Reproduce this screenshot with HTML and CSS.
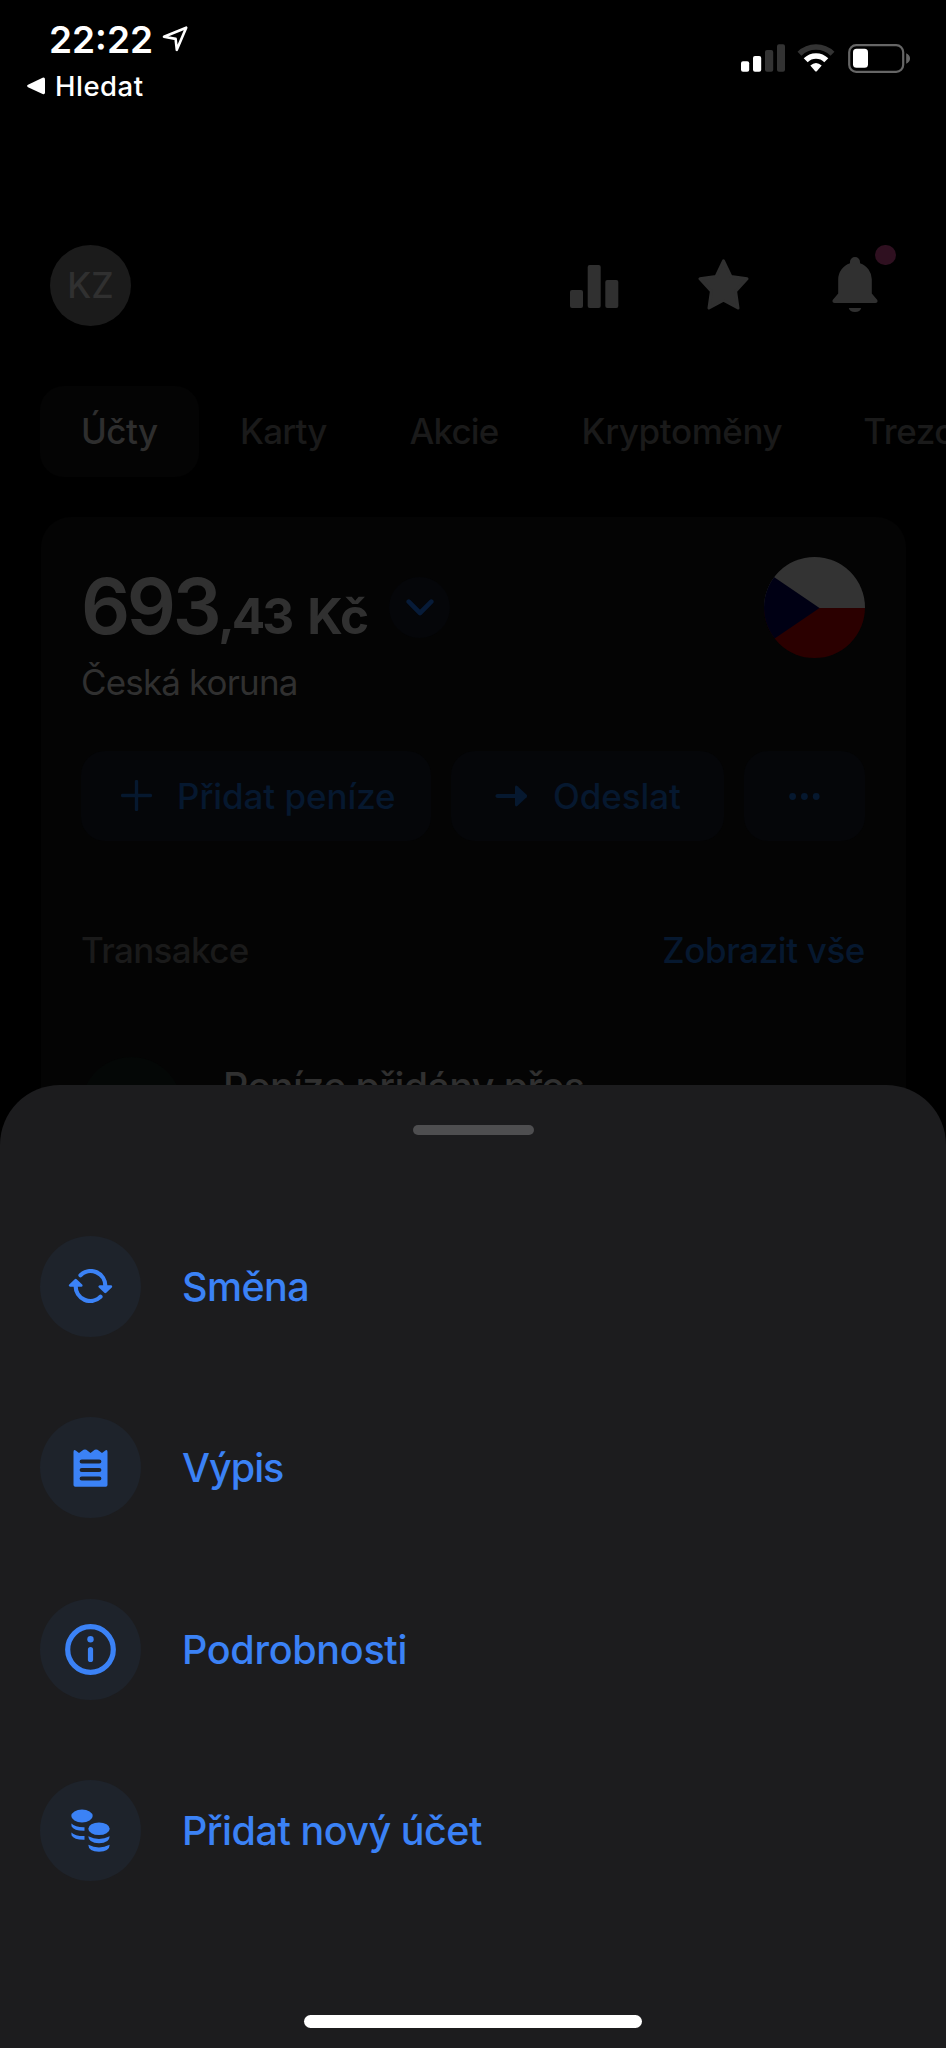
FILE: index.html
```html
<!DOCTYPE html>
<html lang="cs">
<head>
<meta charset="utf-8">
<title>Účty</title>
<link rel="stylesheet" href="styles.css">
</head>
<body>
<div class="screen">
  <header class="status">
    <div class="status-left">
      <div class="clock">
        <span>22:22</span>
        <svg width="27" height="28" viewBox="0 0 27 28" fill="none" stroke="#fff" stroke-width="2.6" stroke-linejoin="round"><path d="M2 11.8 24.2 2.7 14.8 24.8 13.6 13.9z"/></svg>
      </div>
      <div class="back">
        <svg width="19" height="18" viewBox="0 0 19 18"><path d="M1 7.8 15.6.8Q18 0 18 2.400V15.400Q18 17.800 15.600 17L1 10.200Q-.8 9 1 7.800z" fill="#fff"/></svg>
        <span>Hledat</span>
      </div>
    </div>
    <div class="status-right">
      <svg class="signal" width="44" height="28" viewBox="0 0 44 28">
        <rect x="0" y="17.300" width="8.200" height="10.500" rx="2" fill="#fff"/>
        <rect x="12" y="12" width="8.200" height="15.800" rx="2" fill="#fff"/>
        <rect x="24" y="6" width="8.200" height="21.800" rx="2" fill="#333"/>
        <rect x="36" y="0.300" width="8" height="27.500" rx="2" fill="#333"/>
      </svg>
      <svg class="wifi" width="38" height="28" viewBox="0 0 38 28">
        <path d="M2.500 9.800A23.500 23.500 0 0 1 35.500 9.800" fill="none" stroke="#333" stroke-width="5.600"/>
        <path d="M8.700 16.300A14.500 14.500 0 0 1 29.300 16.300" fill="none" stroke="#fff" stroke-width="5.600"/>
        <path d="M13.300 21.600Q19 16.400 24.700 21.600L20 27Q19 28 18 27z" fill="#fff"/>
      </svg>
      <svg width="63" height="29" viewBox="0 0 63 29">
        <rect x="1.200" y="1.200" width="54" height="26.600" rx="7" fill="none" stroke="#666" stroke-width="2.200"/>
        <rect x="5" y="4.800" width="15" height="19" rx="3.500" fill="#fff"/>
        <path d="M58.200 9.300Q62 11 62 14.500T58.200 19.700z" fill="#666"/>
      </svg>
    </div>
  </header>

  <div class="topbar">
    <div class="avatar">KZ</div>
    <nav class="tools">
      <svg width="49" height="44" viewBox="0 0 49 44" fill="#303030"><rect y="25" width="13" height="18" rx="2"/><rect x="17.700" width="13" height="43" rx="2"/><rect x="35.300" y="15" width="13" height="28" rx="2"/></svg>
      <svg class="star" width="51" height="52" viewBox="0 0 51 52"><path d="M25.500 1.800 33 17.600 49 19.800 37.600 32.200 40 49 25.500 41.200 11 49 13.400 32.200 2 19.800 18 17.600z" fill="#303030" stroke="#303030" stroke-width="3" stroke-linejoin="round"/></svg>
      <div class="bell">
        <svg width="46" height="57" viewBox="0 0 46 57" fill="#303030"><path d="M18 6.200V5A5 5 0 0 1 28 5V6.200A17 17 0 0 1 39.800 22.500V36.500L45.300 43Q46.300 45.700 43.500 46H2.500Q-.3 45.700.7 43L6.200 36.500V22.500A17 17 0 0 1 18 6.200z"/><path d="M16.800 51H29.200A6.300 5 0 0 1 16.800 51z"/></svg>
        <i class="dot"></i>
      </div>
    </nav>
  </div>

  <nav class="tabs">
    <a class="tab active">Účty</a>
    <a class="tab tight">Karty</a>
    <a class="tab tight">Akcie</a>
    <a class="tab">Kryptoměny</a>
    <a class="tab">Trezory</a>
  </nav>

  <main class="card">
    <div class="account">
      <div>
        <div class="balance">
          <span class="whole">693</span><span class="cents">,43</span><span class="unit">Kč</span>
          <span class="expand"><svg width="28" height="18" viewBox="0 0 28 18" fill="none" stroke="#071b38" stroke-width="4.600" stroke-linecap="round" stroke-linejoin="round"><path d="M2.700 2.700 14 14 25.300 2.700"/></svg></span>
        </div>
        <div class="currency">Česká koruna</div>
      </div>
      <svg class="flag" width="101" height="101" viewBox="0 0 101 101">
        <clipPath id="round"><circle cx="50.500" cy="50.500" r="50.500"/></clipPath>
        <g clip-path="url(#round)"><path d="M0 0H101V51H0z" fill="#333"/><path d="M0 51H101V101H0z" fill="#2b0000"/><path d="M-20 -.2 55.500 51-20 102.200z" fill="#000014"/></g>
      </svg>
    </div>
    <div class="actions">
      <a class="btn add"><svg width="31" height="31" viewBox="0 0 31 31" stroke="#06182f" stroke-width="3.400" stroke-linecap="round"><path d="M15.500 1.600V29.400M1.600 15.500H29.400"/></svg>Přidat peníze</a>
      <a class="btn send"><svg width="33" height="22" viewBox="0 0 33 22"><path d="M2.500 11H22" stroke="#06182f" stroke-width="4.200" stroke-linecap="round"/><path d="M20 2Q20.400-.4 22.600 1.200L31.600 9.800Q32.600 11 31.600 12.200L22.600 20.800Q20.400 22.400 20 20z" fill="#06182f"/></svg>Odeslat</a>
      <a class="btn more"><svg width="31" height="7" viewBox="0 0 31 7" fill="#06182f"><circle cx="3.600" cy="3.500" r="3.400"/><circle cx="15.400" cy="3.500" r="3.400"/><circle cx="27.200" cy="3.500" r="3.400"/></svg></a>
    </div>
    <div class="section"><span class="section-title">Transakce</span><a class="all">Zobrazit vše</a></div>
    <div class="transaction"><span class="tx-icon"></span><span class="tx-name">Peníze přidány přes</span></div>
  </main>

  <section class="sheet">
    <div class="handle"></div>
    <ul class="menu">
      <li class="item"><span class="badge"><svg class="swap" width="45" height="34" viewBox="0 0 45 34" fill="none" stroke="#3b82f6" stroke-width="4.200" stroke-linecap="round"><path d="M12.500 6.200A14.600 14.600 0 0 1 37.300 17M32.500 27.800A14.600 14.600 0 0 1 7.700 17"/><path d="M31.800 17.600H42.800L37.300 22.800zM2.200 16.400H13.200L7.700 11.200z" fill="#3b82f6" stroke-width="2.800" stroke-linejoin="round"/></svg></span><span class="label l1">Směna</span></li>
      <li class="item"><span class="badge"><svg width="35" height="38" viewBox="0 0 35 38"><path d="M.5 3Q.5 0 3 1.700L6 4 10.500.8Q12 0 13.300.8L17.500 4 21.700.8Q23 0 24.500.8L29 4 32 1.700Q34.500 0 34.500 3V36Q34.500 37.800 32.700 37.800H2.300Q.5 37.800.5 36z" fill="#3b82f6"/><path d="M8.700 12.500H26.300M8.700 21H26.300M8.700 29.500H26.300" stroke="#1e232b" stroke-width="4.200" stroke-linecap="round"/></svg></span><span class="label l2">Výpis</span></li>
      <li class="item"><span class="badge"><svg width="51" height="51" viewBox="0 0 51 51"><circle cx="25.500" cy="25.500" r="22.800" fill="none" stroke="#3b82f6" stroke-width="5.200"/><circle cx="25.500" cy="15.300" r="3.200" fill="#3b82f6"/><path d="M25.500 25.500V35.500" stroke="#3b82f6" stroke-width="5.200" stroke-linecap="round"/></svg></span><span class="label l3">Podrobnosti</span></li>
      <li class="item"><span class="badge"><svg width="39" height="43" viewBox="0 0 39 43" fill="#3b82f6"><ellipse cx="11" cy="7" rx="10.700" ry="6.500"/><ellipse cx="28" cy="19.700" rx="10.700" ry="6.300"/><path d="M.3 14.600Q4 18.300 13.500 18.200V21.800Q3 22 .6 17.600zM.3 23.500Q4 27.200 13.500 27.100V30.700Q3 30.900.6 26.500zM17.300 27.300Q28 32.600 38.700 27.300 38.500 34.200 28 34.200T17.300 27.300zM17.300 35.800Q28 41.100 38.700 35.800 38.500 42.700 28 42.700T17.300 35.800z"/></svg></span><span class="label l4">Přidat nový účet</span></li>
    </ul>
    <div class="home"></div>
  </section>
</div>
</body>
</html>
```
FILE: styles.css
```css
* { box-sizing: border-box; }
body {
  margin: 0;
  background: #000;
  font-family: Inter, "Liberation Sans", sans-serif;
}
svg { display: block; flex: none; }
.screen {
  position: relative;
  width: 946px;
  height: 2048px;
  overflow: hidden;
  background: #000;
}

/* Status bar */
.status {
  display: flex;
  justify-content: space-between;
  height: 244px;
  color: #fff;
}
.status-left { padding: 19px 0 0 27px; }
.clock {
  display: flex;
  align-items: center;
  gap: 9px;
  height: 40px;
  padding-left: 22px;
  font-size: 37px;
  font-weight: 600;
}
.back {
  display: flex;
  align-items: center;
  gap: 9px;
  height: 36px;
  margin-top: 9px;
  font-size: 27.5px;
  font-weight: 500;
  letter-spacing: .5px;
}
.status-right {
  display: flex;
  align-items: flex-start;
  padding: 44px 35px 0 0;
}
.wifi { margin: 0 13px 0 12px; }

/* Top bar */
.topbar {
  display: flex;
  align-items: flex-start;
  justify-content: space-between;
  height: 142px;
  padding: 0 68px 0 50px;
}
.avatar {
  width: 81px;
  height: 81px;
  margin-top: .5px;
  border-radius: 50%;
  background: #1b1b1b;
  color: #303030;
  font-size: 35px;
  font-weight: 500;
  line-height: 81px;
  text-align: center;
}
.tools { display: flex; padding-top: 13px; }
.tools > svg:first-child { margin: 8px 79px 0 0; }
.star { margin: 2px 83px 0 0; }
.bell { position: relative; }
.dot {
  position: absolute;
  left: 43px;
  top: -12.5px;
  width: 20.5px;
  height: 20.5px;
  border-radius: 50%;
  background: #2f1020;
}

/* Tabs */
.tabs {
  display: flex;
  height: 131px;
  padding-left: 40px;
}
.tab {
  flex: none;
  height: 90.5px;
  padding: 0 40px 0 41px;
  border-radius: 24px;
  color: #1a1a1a;
  font-size: 35px;
  font-weight: 500;
  line-height: 91px;
  letter-spacing: -.42px;
}
.tab.tight { padding-right: 42px; letter-spacing: -.85px; }
.tab.active {
  width: 159px;
  background: #040404;
  color: #2e2e2e;
  letter-spacing: -.6px;
}

/* Account card */
.card {
  height: 640px;
  margin: 0 40.5px;
  padding: 40px 40.5px 0;
  border-radius: 30px 30px 0 0;
  background: #040404;
}
.account {
  display: flex;
  justify-content: space-between;
  height: 193.5px;
}
.balance {
  display: flex;
  align-items: baseline;
  height: 100px;
  color: #303030;
  line-height: 99px;
}
.whole { font-size: 77px; font-weight: 600; letter-spacing: -3.4px; }
.cents { font-size: 49.5px; font-weight: 700; letter-spacing: -3px; }
.unit { margin-left: 16px; font-size: 49.5px; font-weight: 700; letter-spacing: -.8px; }
.expand {
  display: flex;
  align-self: flex-start;
  align-items: center;
  justify-content: center;
  width: 61px;
  height: 61px;
  margin: 20px 0 0 21px;
  border-radius: 50%;
  background: #050609;
}
.currency {
  height: 50px;
  color: #303030;
  font-size: 35px;
  letter-spacing: -.85px;
  line-height: 50px;
}
.actions { display: flex; gap: 20px; height: 90.5px; }
.btn {
  display: flex;
  align-items: center;
  height: 90.5px;
  border-radius: 24px;
  background: #050609;
  color: #06182f;
  font-size: 35px;
  font-weight: 500;
  letter-spacing: -.08px;
}
.add { width: 350px; padding-left: 40px; gap: 25px; }
.send { width: 273px; padding-left: 44px; gap: 25px; }
.send svg, .more svg { margin-top: 1px; }
.more { flex: 1; justify-content: center; }
.section {
  display: flex;
  justify-content: space-between;
  margin-top: 83.5px;
  font-size: 35px;
  font-weight: 500;
  line-height: 50px;
}
.section-title { color: #1a1a1a; letter-spacing: -.65px; }
.all { color: #06182f; letter-spacing: -.4px; }
.transaction {
  display: flex;
  align-items: center;
  gap: 41px;
  height: 101px;
  margin-top: 82px;
}
.tx-icon { width: 101px; height: 101px; border-radius: 50%; background: #040706; }
.tx-name {
  margin-top: -41px;
  color: #303030;
  font-size: 39.5px;
  font-weight: 500;
  letter-spacing: -.66px;
}

/* Bottom sheet over the dimmed page */
.sheet {
  position: absolute;
  inset: 1084.5px 0 0;
  display: flex;
  flex-direction: column;
  align-items: center;
  padding: 40.5px 40px 20px;
  border-radius: 60px 60px 0 0;
  background: #1c1c1e;
}
.handle { width: 121px; height: 10px; border-radius: 5px; background: #4e4e50; }
.menu {
  display: flex;
  flex-direction: column;
  gap: 80.6px;
  width: 100%;
  margin: 100.6px 0 0;
  padding: 0;
  list-style: none;
}
.item { display: flex; align-items: center; gap: 41px; height: 101px; }
.badge {
  display: flex;
  align-items: center;
  justify-content: center;
  width: 101px;
  height: 101px;
  border-radius: 50%;
  background: #1e232b;
}
.swap { margin-right: 1px; }
.label { padding-top: 1px; color: #3b82f6; font-size: 39.5px; font-weight: 500; }
.l1 { letter-spacing: -.6px; }
.l2 { letter-spacing: -1px; }
.l3 { letter-spacing: -.3px; }
.l4 { letter-spacing: -.5px; }
.home {
  width: 338px;
  height: 13px;
  margin-top: auto;
  border-radius: 7px;
  background: #fff;
}
```
